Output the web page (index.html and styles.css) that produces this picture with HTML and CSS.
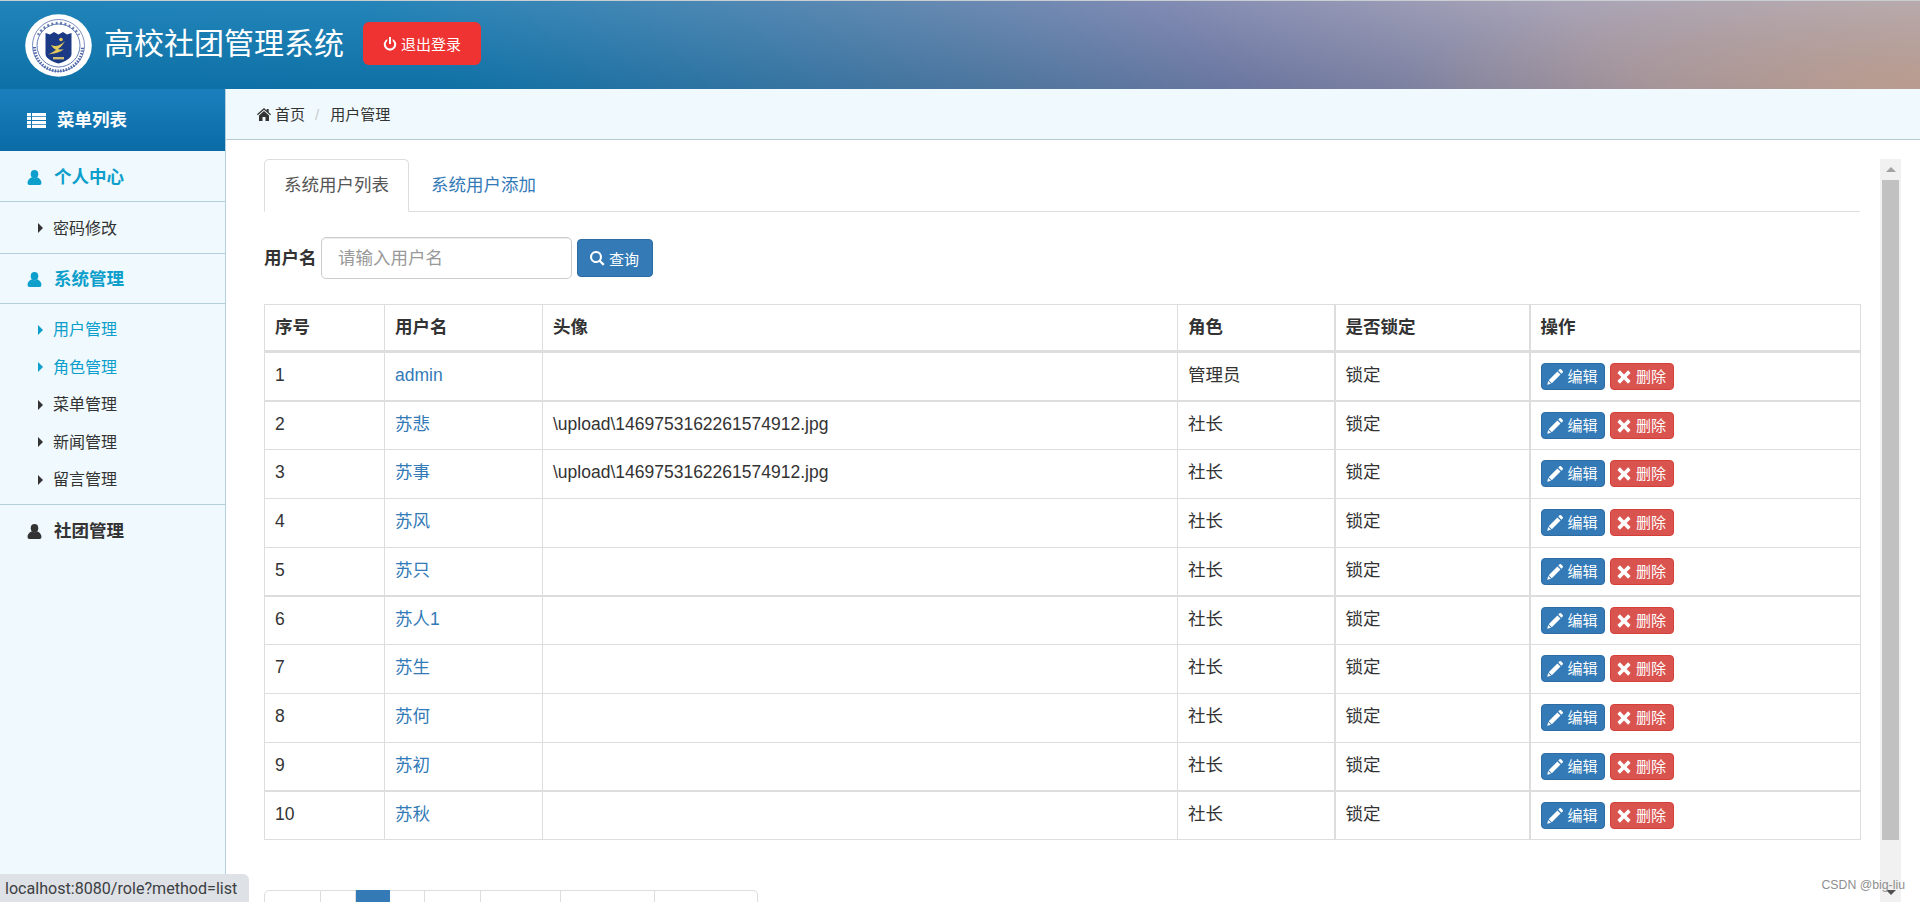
FILE: index.html
```html
<!DOCTYPE html>
<html lang="zh-CN">
<head>
<meta charset="utf-8">
<title>高校社团管理系统</title>
<link rel="stylesheet" href="styles.css">
</head>
<body>
<svg class="defs" width="0" height="0" aria-hidden="true">
  <symbol id="i-user" viewBox="0 0 16 16"><ellipse cx="8" cy="4.400" rx="4" ry="4.400"/><path d="M.6 13.600c0-3 2.500-5.300 4.900-5.900.7.700 1.600 1 2.500 1s1.800-.3 2.500-1c2.400.6 4.900 2.900 4.900 5.900 0 1.500-.8 2.400-2 2.400H2.600c-1.200 0-2-.9-2-2.400z"/></symbol>
  <symbol id="i-list" viewBox="0 0 19 15"><path d="M0 0h4v3.200H0zM5 0h14v3.200H5zM0 3.900h4v3.200H0zM5 3.900h14v3.200H5zM0 7.900h4v3.200H0zM5 7.900h14v3.200H5zM0 11.800h4V15H0zM5 11.800h14V15H5z"/></symbol>
  <symbol id="i-home" viewBox="0 0 14 13"><path d="M7 0l2.700 2.400V1h2v3.200L14 6.300l-.8.9L7 1.800.8 7.200 0 6.300z"/><path d="M7 3.100l5 4.400V13H8.500V9h-3v4H2V7.500z"/></symbol>
  <symbol id="i-off" viewBox="0 0 14 14"><path d="M6 0h2v7H6z"/><path d="M4.300 1.900v2.200a4.200 4.200 0 1 0 5.400 0V1.900a6.200 6.200 0 1 1-5.400 0z"/></symbol>
  <symbol id="i-search" viewBox="0 0 15 15"><path fill-rule="evenodd" d="M6 0a6 6 0 0 1 4.900 9.400l3.700 3.700-1.600 1.600-3.700-3.700A6 6 0 1 1 6 0zm0 2.100a3.900 3.900 0 1 0 0 7.800 3.900 3.900 0 0 0 0-7.800z"/></symbol>
  <symbol id="i-pencil" viewBox="0 0 16 16"><path d="M12.600.3c.5-.4 1-.3 1.400 0l1.700 1.700c.4.400.4 1 0 1.400l-1.300 1.300-3.100-3.100zM10.400 2.500l3.100 3.100-8.700 8.700-3.100-3.100zM1.200 12l2.800 2.800-3.800 1z"/></symbol>
  <symbol id="i-remove" viewBox="0 0 14 14"><path d="M3.400.8L7 4.400 10.600.8c.3-.3.7-.3 1 0l1.600 1.600c.3.300.3.700 0 1L9.600 7l3.600 3.600c.3.300.3.700 0 1l-1.600 1.600c-.3.300-.7.300-1 0L7 9.600l-3.600 3.600c-.3.300-.7.300-1 0L.8 11.600c-.3-.3-.3-.7 0-1L4.400 7 .8 3.400c-.3-.3-.3-.7 0-1L2.400.8c.3-.3.700-.3 1 0z"/></symbol>
</svg>

<header class="topbar">
  <svg class="logo" viewBox="0 0 67 63" role="img" aria-label="校徽">
    <ellipse cx="33.500" cy="31.500" rx="33.300" ry="31.200" fill="#fff"/>
    <circle cx="33.500" cy="31.500" r="26" fill="none" stroke="#3f5ba6" stroke-width=".7"/>
    <path d="M9.500 33a24 24 0 0 0 48 0" fill="none" stroke="#4b64a8" stroke-width="3" stroke-dasharray="1.400 1.400"/>
    <path d="M13 21a23.500 23.500 0 0 1 41 0" fill="none" stroke="#6d7fb6" stroke-width="2.400" stroke-dasharray="2 2.400"/>
    <circle cx="33.500" cy="31.500" r="21.500" fill="none" stroke="#3a5aa0" stroke-width=".8"/>
    <path d="M20.500 19l4.500 1.500 4-2.500 4.500 2.500L38 18l4 2.500 4.500-1.500v21c0 4-6 7.500-13 9.500-7-2-13-5.500-13-9.500z" fill="#1b3a85"/>
    <path d="M26 31c5 2.500 9 .5 14-4-3 5-5 7-7 8 2 .8 4 .8 6 0-4 3.500-9 4.500-16 5.500 4-1.800 6-3 8-4.700-2-1-4-2.800-5-4.800z" fill="#e4c85a"/>
    <circle cx="36" cy="25.500" r="1.800" fill="#e4c85a"/>
    <path d="M28 43h11v2.400H28z" fill="#cdbd72"/>
  </svg>
  <h1 class="brand">高校社团管理系统</h1>
  <button class="logout" type="button"><svg class="ic-off"><use href="#i-off"/></svg>退出登录</button>
</header>

<div class="shell">
  <aside class="sidebar">
    <div class="menu-title"><svg class="ic-list"><use href="#i-list"/></svg>菜单列表</div>
    <div class="group-head is-active"><svg class="ic-user"><use href="#i-user"/></svg>个人中心</div>
    <ul class="sub">
      <li><span class="caret"></span>密码修改</li>
    </ul>
    <div class="group-head is-active"><svg class="ic-user"><use href="#i-user"/></svg>系统管理</div>
    <ul class="sub">
      <li class="is-active"><span class="caret"></span>用户管理</li>
      <li class="is-active"><span class="caret"></span>角色管理</li>
      <li><span class="caret"></span>菜单管理</li>
      <li><span class="caret"></span>新闻管理</li>
      <li><span class="caret"></span>留言管理</li>
    </ul>
    <div class="group-head no-line"><svg class="ic-user"><use href="#i-user"/></svg>社团管理</div>
  </aside>

  <main class="main">
    <nav class="crumbs">
      <svg class="ic-home"><use href="#i-home"/></svg><span>首页</span>
      <span class="crumb-sep">/</span><span>用户管理</span>
    </nav>
    <div class="pane">
      <div class="pane-body">
        <ul class="tabs">
          <li class="tab is-current">系统用户列表</li>
          <li class="tab">系统用户添加</li>
        </ul>
        <form class="search">
          <label class="search-label" for="uname">用户名</label>
          <input class="search-input" id="uname" type="text" placeholder="请输入用户名">
          <button class="search-btn" type="button"><svg class="ic-search"><use href="#i-search"/></svg>查询</button>
        </form>
        <table class="grid">
          <colgroup><col class="c1"><col class="c2"><col class="c3"><col class="c4"><col class="c5"><col class="c6"></colgroup>
          <thead>
            <tr><th>序号</th><th>用户名</th><th>头像</th><th>角色</th><th>是否锁定</th><th>操作</th></tr>
          </thead>
          <tbody>
            <tr><td>1</td><td><a href="#">admin</a></td><td></td><td>管理员</td><td>锁定</td><td><div class="acts"><a class="act edit"><svg class="ic-pencil"><use href="#i-pencil"/></svg>编辑</a><a class="act del"><svg class="ic-remove"><use href="#i-remove"/></svg>删除</a></div></td></tr>
            <tr><td>2</td><td><a href="#">苏悲</a></td><td>\upload\1469753162261574912.jpg</td><td>社长</td><td>锁定</td><td><div class="acts"><a class="act edit"><svg class="ic-pencil"><use href="#i-pencil"/></svg>编辑</a><a class="act del"><svg class="ic-remove"><use href="#i-remove"/></svg>删除</a></div></td></tr>
            <tr><td>3</td><td><a href="#">苏事</a></td><td>\upload\1469753162261574912.jpg</td><td>社长</td><td>锁定</td><td><div class="acts"><a class="act edit"><svg class="ic-pencil"><use href="#i-pencil"/></svg>编辑</a><a class="act del"><svg class="ic-remove"><use href="#i-remove"/></svg>删除</a></div></td></tr>
            <tr><td>4</td><td><a href="#">苏风</a></td><td></td><td>社长</td><td>锁定</td><td><div class="acts"><a class="act edit"><svg class="ic-pencil"><use href="#i-pencil"/></svg>编辑</a><a class="act del"><svg class="ic-remove"><use href="#i-remove"/></svg>删除</a></div></td></tr>
            <tr><td>5</td><td><a href="#">苏只</a></td><td></td><td>社长</td><td>锁定</td><td><div class="acts"><a class="act edit"><svg class="ic-pencil"><use href="#i-pencil"/></svg>编辑</a><a class="act del"><svg class="ic-remove"><use href="#i-remove"/></svg>删除</a></div></td></tr>
            <tr><td>6</td><td><a href="#">苏人1</a></td><td></td><td>社长</td><td>锁定</td><td><div class="acts"><a class="act edit"><svg class="ic-pencil"><use href="#i-pencil"/></svg>编辑</a><a class="act del"><svg class="ic-remove"><use href="#i-remove"/></svg>删除</a></div></td></tr>
            <tr><td>7</td><td><a href="#">苏生</a></td><td></td><td>社长</td><td>锁定</td><td><div class="acts"><a class="act edit"><svg class="ic-pencil"><use href="#i-pencil"/></svg>编辑</a><a class="act del"><svg class="ic-remove"><use href="#i-remove"/></svg>删除</a></div></td></tr>
            <tr><td>8</td><td><a href="#">苏何</a></td><td></td><td>社长</td><td>锁定</td><td><div class="acts"><a class="act edit"><svg class="ic-pencil"><use href="#i-pencil"/></svg>编辑</a><a class="act del"><svg class="ic-remove"><use href="#i-remove"/></svg>删除</a></div></td></tr>
            <tr><td>9</td><td><a href="#">苏初</a></td><td></td><td>社长</td><td>锁定</td><td><div class="acts"><a class="act edit"><svg class="ic-pencil"><use href="#i-pencil"/></svg>编辑</a><a class="act del"><svg class="ic-remove"><use href="#i-remove"/></svg>删除</a></div></td></tr>
            <tr><td>10</td><td><a href="#">苏秋</a></td><td></td><td>社长</td><td>锁定</td><td><div class="acts"><a class="act edit"><svg class="ic-pencil"><use href="#i-pencil"/></svg>编辑</a><a class="act del"><svg class="ic-remove"><use href="#i-remove"/></svg>删除</a></div></td></tr>
          </tbody>
        </table>
        <ul class="pager">
          <li class="p-a"></li><li class="p-b"></li><li class="p-b is-current"></li><li class="p-b"></li><li class="p-c"></li><li class="p-d"></li><li class="p-e"></li><li class="p-f"></li>
        </ul>
      </div>
      <div class="scrollbar">
        <span class="sb-up"></span>
        <span class="sb-thumb"></span>
        <span class="sb-down"></span>
      </div>
    </div>
  </main>
</div>

<div class="status">localhost:8080/role?method=list</div>
<div class="watermark">CSDN @big-liu</div>
</body>
</html>
```

FILE: styles.css
```css
* { box-sizing: border-box; }

html, body {
  height: 100%;
  margin: 0;
}

body {
  display: flex;
  flex-direction: column;
  overflow: hidden;
  font-family: "Liberation Sans", "Noto Sans CJK SC", sans-serif;
  font-size: 17.5px;
  line-height: 25px;
  color: #333;
  background: #fff;
}

.defs { position: absolute; }

svg { fill: currentColor; display: block; flex: none; }

/* top bar */
.topbar {
  flex: none;
  height: 89px;
  display: flex;
  align-items: center;
  border-top: 1px solid #c9ced2;
  padding-left: 25px;
  background:
    radial-gradient(ellipse 520px 110px at 100% 100%, rgba(205, 160, 130, .6), rgba(205, 160, 130, 0)),
    linear-gradient(to bottom, rgba(255, 255, 255, .08), rgba(0, 0, 0, .08)),
    linear-gradient(42deg, #0e7ab4 2%, #107ab3 22%, #527fab 49%, #7581ad 62%, #a29cb0 82%, #aea4ac 98%);
}

.logo { width: 67px; height: 63px; }

.brand {
  margin: -3px 0 0 12px;
  font-size: 30px;
  line-height: 40px;
  font-weight: 400;
  color: #fff;
}

.logout {
  margin: -3px 0 0 19px;
  width: 118px;
  height: 43px;
  display: flex;
  align-items: center;
  justify-content: center;
  gap: 4px;
  border: 0;
  border-radius: 6px;
  background: #ef3333;
  color: #fff;
  font: 15px "Liberation Sans", "Noto Sans CJK SC", sans-serif;
}

.ic-off { width: 14px; height: 14px; }

/* layout */
.shell {
  flex: 1;
  min-height: 0;
  display: flex;
}

/* sidebar */
.sidebar {
  flex: none;
  width: 226px;
  background: #f0f9fd;
  border-right: 1px solid #b5cfdd;
}

.menu-title {
  height: 62px;
  display: flex;
  align-items: center;
  gap: 11px;
  padding-left: 27px;
  background: linear-gradient(to bottom, #1a80bd, #0a6ba6);
  color: #fff;
  font-size: 17.500px;
  font-weight: 700;
}

.ic-list { width: 19px; height: 15px; }

.group-head {
  height: 50px;
  display: flex;
  align-items: center;
  gap: 12px;
  padding: 2px 0 0 27px;
  border-bottom: 1px solid #b5cfdd;
  font-size: 17.500px;
  font-weight: 700;
}

.menu-title + .group-head { height: 51px; }

.group-head.is-active { color: #0d9fcb; }
.group-head.no-line { border-bottom: 0; height: 53px; padding-top: 0; }

.ic-user { width: 15px; height: 15px; }

.sub {
  margin: 0;
  padding: 7.500px 0 5.500px;
  list-style: none;
  border-bottom: 1px solid #b5cfdd;
  font-size: 16px;
}

.sub li {
  height: 37.500px;
  display: flex;
  align-items: center;
  gap: 10px;
  padding-left: 38px;
}

.sub li.is-active { color: #0d9fcb; }

.caret {
  width: 0;
  height: 0;
  border-left: 5px solid currentColor;
  border-top: 5px solid transparent;
  border-bottom: 5px solid transparent;
}

/* main */
.main {
  flex: 1;
  min-width: 0;
  display: flex;
  flex-direction: column;
}

.crumbs {
  flex: none;
  height: 51px;
  display: flex;
  align-items: center;
  padding: 0 0 0 31px;
  background: #f0f9fd;
  border-bottom: 1px solid #b9c9d3;
  font-size: 15px;
}

.ic-home { width: 14px; height: 13px; margin-right: 4px; }

.crumb-sep {
  margin: 0 11px 0 10px;
  color: #ccc;
}

.pane {
  flex: 1;
  min-height: 0;
  display: flex;
  padding: 19px 19px 0 38px;
  overflow: hidden;
}

.pane-body {
  flex: 1;
  min-width: 0;
  padding-right: 20px;
}

/* tabs */
.tabs {
  margin: 0;
  padding: 0;
  list-style: none;
  display: flex;
  height: 53px;
  border-bottom: 1px solid #ddd;
}

.tab {
  height: 53px;
  margin-right: 2px;
  padding: 13px 19px 0;
  border: 1px solid transparent;
  color: #337ab7;
}

.tab.is-current {
  border-color: #ddd #ddd #fff;
  border-radius: 5px 5px 0 0;
  background: #fff;
  color: #555;
}

/* search */
.search {
  display: flex;
  align-items: center;
  gap: 4.500px;
  margin: 25px 0;
  height: 42px;
}

.search-label { font-weight: 700; }

.search-input {
  width: 251px;
  height: 42px;
  padding: 0 16px;
  border: 1px solid #ccc;
  border-radius: 5px;
  font: 17.500px "Liberation Sans", "Noto Sans CJK SC", sans-serif;
  color: #555;
  box-shadow: inset 0 1px 1px rgba(0, 0, 0, .075);
}

.search-input::placeholder { color: #999; opacity: 1; }

.search-btn {
  width: 76px;
  height: 38px;
  display: flex;
  align-items: center;
  justify-content: center;
  gap: 4px;
  border: 1px solid #2e6da4;
  border-radius: 4px;
  background: #337ab7;
  color: #fff;
  font: 15px "Liberation Sans", "Noto Sans CJK SC", sans-serif;
}

.ic-search { width: 15px; height: 15px; }

/* table */
.grid {
  width: 1596px;
  table-layout: fixed;
  border-collapse: collapse;
}

.c1 { width: 120px; }
.c2 { width: 158px; }
.c3 { width: 635px; }
.c4 { width: 157px; }
.c5 { width: 195px; }
.c6 { width: 331px; }

.grid th,
.grid td {
  padding: 10px;
  border: 1px solid #ddd;
  text-align: left;
  vertical-align: top;
}

.grid th:nth-child(4),
.grid td:nth-child(4),
.grid th:nth-child(5),
.grid td:nth-child(5) {
  border-right-width: 2px;
}

.grid thead tr { height: 47px; }
.grid thead th { border-bottom-width: 3px; }

.grid tbody tr { height: 49px; }
.grid tbody tr:nth-child(4n+2),
.grid tbody tr:nth-child(4n+5) { height: 48px; }
.grid tbody tr:nth-child(4n+1) td { border-bottom-width: 2px; }

.grid a { color: #337ab7; text-decoration: none; }

.acts {
  display: flex;
  gap: 5px;
}

.grid .act {
  width: 64px;
  height: 27px;
  display: flex;
  align-items: center;
  justify-content: center;
  gap: 4px;
  border: 1px solid;
  border-radius: 4px;
  color: #fff;
  font-size: 15px;
  line-height: 20px;
}

.grid .edit { background: #337ab7; border-color: #2e6da4; }
.grid .del { background: #d9534f; border-color: #d43f3a; gap: 5px; }

.ic-pencil { width: 16px; height: 16px; }
.ic-remove { width: 14px; height: 14px; }

/* pager */
.pager {
  display: flex;
  margin: 50px 0 0;
  padding: 0;
  list-style: none;
  height: 45px;
}

.pager li {
  height: 45px;
  border: 1px solid #ddd;
  border-left-width: 0;
  background: #fff;
}

.pager li:first-child {
  border-left-width: 1px;
  border-top-left-radius: 5px;
}

.pager li:last-child { border-top-right-radius: 5px; }

.pager li.is-current { background: #337ab7; border-color: #337ab7; }

.p-a { width: 57px; }
.p-b { width: 34.500px; }
.p-c { width: 56px; }
.p-d { width: 80px; }
.p-e { width: 94px; }
.p-f { width: 103px; }

/* fake scrollbar of the inner frame */
.scrollbar {
  flex: none;
  width: 21px;
  display: flex;
  flex-direction: column;
  align-items: center;
  background: #f1f1f1;
}

.sb-up,
.sb-down {
  flex: none;
  width: 0;
  height: 0;
  border-left: 5px solid transparent;
  border-right: 5px solid transparent;
}

.sb-up {
  margin: 8px 0 8px;
  border-bottom: 5px solid #a3a3a3;
}

.sb-thumb {
  flex: none;
  width: 17px;
  height: 660px;
  background: #c1c1c1;
}

.sb-down {
  margin-top: 50px;
  border-top: 5px solid #505050;
}

/* overlays */
.status {
  position: absolute;
  left: 0;
  bottom: 0;
  width: 249px;
  height: 28px;
  padding: 3px 0 0 5px;
  background: #dee1e6;
  border-top-right-radius: 6px;
  font: 16.100px/24px Roboto, "Liberation Sans", sans-serif;
  color: #3c4043;
  white-space: nowrap;
}

.watermark {
  position: absolute;
  right: 15px;
  bottom: 8px;
  font-size: 12.300px;
  line-height: 18px;
  color: #8f8f8f;
  white-space: nowrap;
}
```
